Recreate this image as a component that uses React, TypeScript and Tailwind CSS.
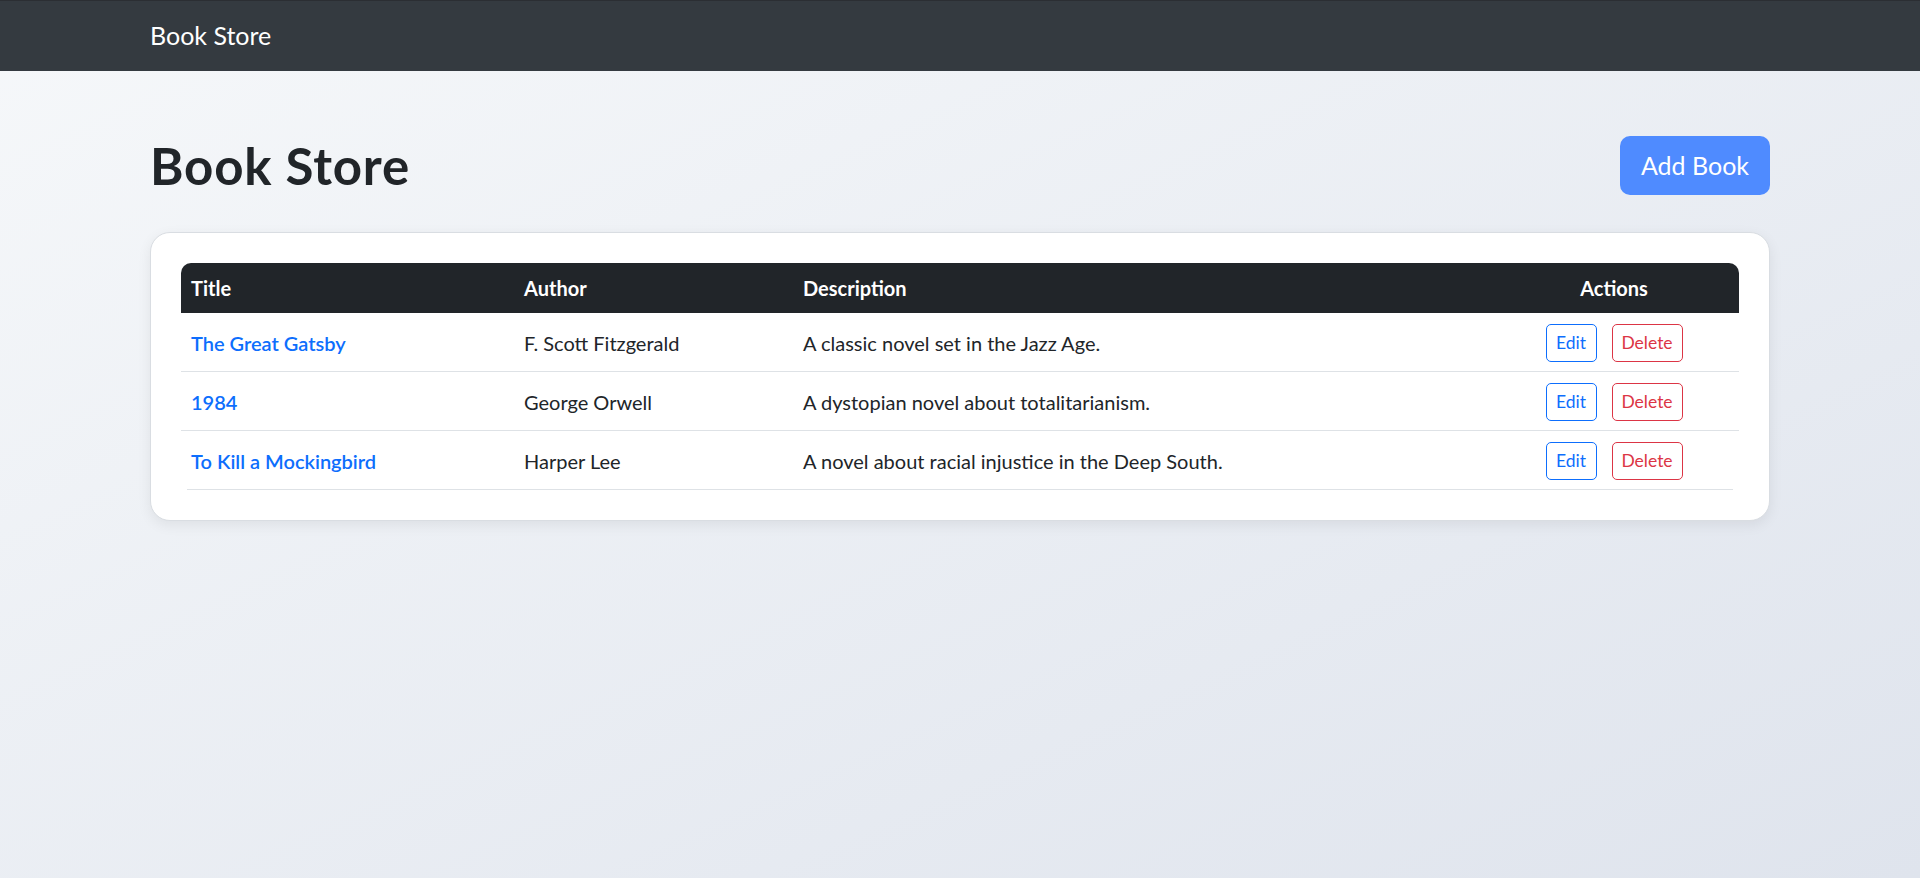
import React from 'react'

type Book = {
  id: number
  title: string
  author: string
  description: string
}

const books: Book[] = [
  { id: 1, title: 'The Great Gatsby', author: 'F. Scott Fitzgerald', description: 'A classic novel set in the Jazz Age.' },
  { id: 2, title: '1984', author: 'George Orwell', description: 'A dystopian novel about totalitarianism.' },
  { id: 3, title: 'To Kill a Mockingbird', author: 'Harper Lee', description: 'A novel about racial injustice in the Deep South.' },
]

export default function App() {
  return (
    <div className="min-h-screen bg-linear-to-br from-[#f6f8fa] to-[#dfe4ed] font-['Lato',sans-serif] text-[#212529]">
      <nav className="h-[71px] bg-[#343a40] border-t border-[#2b2e33]">
        <div className="mx-auto flex h-full w-[1620px] items-center">
          <a href="#" className="text-[25px] text-white">
            Book Store
          </a>
        </div>
      </nav>

      <main className="mx-auto w-[1620px] pt-[65px]">
        <div className="flex h-[59px] items-center justify-between">
          <h1 className="text-[51px] font-bold leading-[60px] tracking-[0.8px]">Book Store</h1>
          <button className="h-[59px] w-[150px] rounded-[10px] bg-[#4f8bff] text-[25px] text-white">Add Book</button>
        </div>

        <div className="mt-[37px] rounded-[20px] border border-[#d9dde2] bg-white p-[30px] shadow-[0_4px_14px_rgba(0,0,0,0.07)]">
          <table className="w-full table-fixed border-separate border-spacing-0 text-[20px]">
            <colgroup>
              <col className="w-[333px]" />
              <col className="w-[279px]" />
              <col className="w-[696px]" />
              <col className="w-[250px]" />
            </colgroup>
            <thead>
              <tr className="bg-[#212529] text-white">
                <th className="rounded-tl-[10px] px-[10px] py-[10px] text-left font-bold leading-[30px]">Title</th>
                <th className="px-[10px] py-[10px] text-left font-bold leading-[30px]">Author</th>
                <th className="px-[10px] py-[10px] text-left font-bold leading-[30px]">Description</th>
                <th className="rounded-tr-[10px] px-[10px] py-[10px] text-center font-bold leading-[30px]">Actions</th>
              </tr>
            </thead>
            <tbody>
              {books.map((b, i) => {
                const last = i === books.length - 1
                const cell = `px-[10px] pt-[11px] pb-[9px] align-middle ${last ? '' : 'border-b border-[#dee2e6]'}`
                return (
                  <tr key={b.id}>
                    <td className={cell}>
                      <a href="#" className="font-semibold text-[#0d6efd]">
                        {b.title}
                      </a>
                    </td>
                    <td className={cell}>{b.author}</td>
                    <td className={cell}>{b.description}</td>
                    <td className={`${cell} text-center`}>
                      <div className="flex items-center justify-center gap-[15px]">
                        <button className="h-[38px] w-[51px] rounded-[5px] border border-[#0d6efd] text-[17.5px] text-[#0d6efd]">
                          Edit
                        </button>
                        <button className="h-[38px] w-[71px] rounded-[5px] border border-[#dc3545] text-[17.5px] text-[#dc3545]">
                          Delete
                        </button>
                      </div>
                    </td>
                  </tr>
                )
              })}
            </tbody>
          </table>
          <div className="mx-[6px] h-px bg-[#dee2e6]" />
        </div>
      </main>
    </div>
  )
}
